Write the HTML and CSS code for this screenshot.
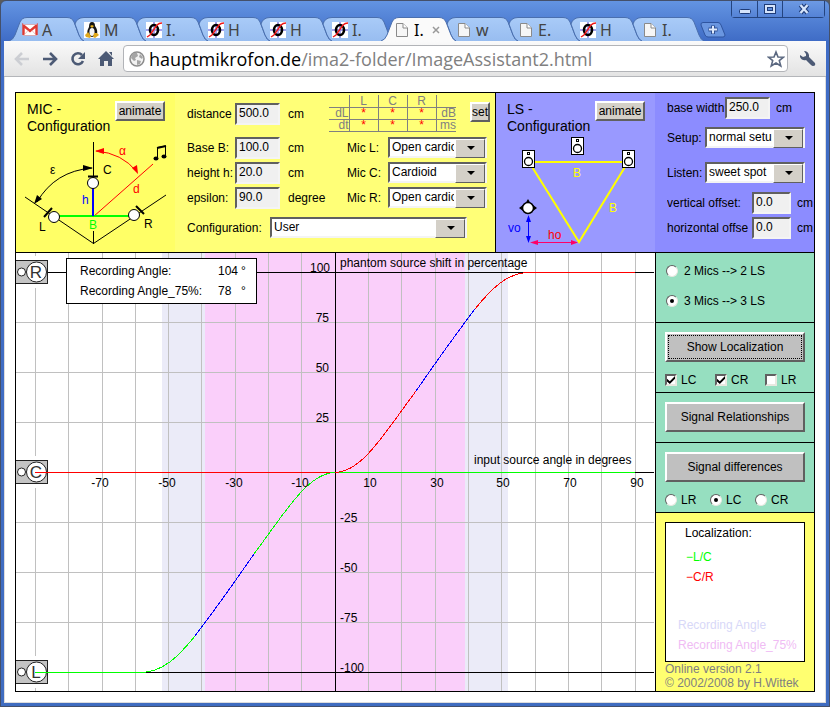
FILE: index.html
```
<!DOCTYPE html>
<html lang="en">
<head>
  <meta charset="UTF-8">
  <meta name="viewport" content="width=device-width, initial-scale=1.0">
  <title>Image Assistant 2</title>
  <link rel="stylesheet" href="styles.css">
</head>
<body>
<!-- shared icons -->
<svg class="defs" width="0" height="0" aria-hidden="true">
  <linearGradient id="tab-fill" x1="0" y1="0" x2="0" y2="1">
    <stop offset="0" stop-color="#a9cbf8"/>
    <stop offset="1" stop-color="#98bdf0"/>
  </linearGradient>
  <symbol id="tab-first" viewBox="0 0 75 24">
    <path d="M0 24 Q4 23 6 18 L11 5 Q13 .5 18 .5 H58 Q63 .5 65 5 L70 18 Q72 23 75 24"/>
  </symbol>
  <symbol id="tab-next" viewBox="0 0 75 24">
    <path d="M13 24 Q10 23 8 18 L4 7 Q6 .5 13 .5 H58 Q63 .5 65 5 L70 18 Q72 23 75 24"/>
  </symbol>
  <symbol id="ico-phase" viewBox="0 0 16 16">
    <rect width="16" height="16" fill="#fff"/>
    <path d="M0 8 H16 M8 0 V16" stroke="#8c84e8" stroke-width="1.5"/>
    <ellipse cx="8" cy="8" rx="4" ry="5" fill="none" stroke="#000" stroke-width="2.6"/>
    <path d="M1 15 L4 13 L11 3 Q13 1 16 1" fill="none" stroke="#f01818" stroke-width="1.4"/>
  </symbol>
  <symbol id="ico-page" viewBox="0 0 16 16">
    <path d="M2.500 1.500 H9 L13.500 6 V14.500 H2.500 Z" fill="#f6f6f6" stroke="#8a8a8a"/>
    <path d="M9 1.500 V6 H13.500" fill="#fff" stroke="#8a8a8a"/>
  </symbol>
  <symbol id="ls-box" viewBox="0 0 14 18">
    <rect x=".5" y=".5" width="12" height="17" fill="#fff" stroke="#000"/>
    <rect x="5.500" y="2.500" width="2" height="2" fill="none" stroke="#000"/>
    <circle cx="6.500" cy="11.500" r="4" fill="#fff" stroke="#000" stroke-width="1.3"/>
  </symbol>
</svg>

<div class="window">
  <header class="titlebar">
    <nav class="tabs">
      <a href="#" class="tab">
        <svg class="shape"><use href="#tab-first"/></svg>
        <svg class="favicon" viewBox="0 0 16 16"><rect x="1" y="3" width="14" height="10" fill="#fff"/><path d="M1.500 13 V3.500 L8 9 L14.500 3.500 V13" fill="none" stroke="#e03a32" stroke-width="2.400"/><path d="M2 13 L6 8.500 M14 13 L10 8.500 M1 13.500 H15 M1 2.500 H15" stroke="#e8a5a0" stroke-width=".7"/></svg>
        <span>A</span>
      </a>
      <a href="#" class="tab">
        <svg class="shape"><use href="#tab-next"/></svg>
        <svg class="favicon" viewBox="0 0 16 16"><rect width="16" height="16" fill="#fff"/><path d="M8 0 Q11 0 11 4 Q14 8 13 12 Q11 15 8 15 Q5 15 3 12 Q3 8 5 5 Q5 0 8 0Z" fill="#151515"/><ellipse cx="8" cy="10" rx="2.600" ry="4" fill="#f4f4f4"/><path d="M6 4 L8 3 L10 4 L8 6Z" fill="#e8b11c"/><path d="M1 13 L4 10 L7 14 L6 16 L2 15Z M10 11 L13 11 L15 13 L11 16 L9 15Z" fill="#e0a81c"/></svg>
        <span>M</span>
      </a>
      <a href="#" class="tab"><svg class="shape"><use href="#tab-next"/></svg><svg class="favicon"><use href="#ico-phase"/></svg><span>I.</span></a>
      <a href="#" class="tab"><svg class="shape"><use href="#tab-next"/></svg><svg class="favicon"><use href="#ico-phase"/></svg><span>H</span></a>
      <a href="#" class="tab"><svg class="shape"><use href="#tab-next"/></svg><svg class="favicon"><use href="#ico-phase"/></svg><span>H</span></a>
      <a href="#" class="tab"><svg class="shape"><use href="#tab-next"/></svg><svg class="favicon"><use href="#ico-phase"/></svg><span>I.</span></a>
      <a href="#" class="tab active"><svg class="shape"><use href="#tab-first"/></svg><svg class="favicon"><use href="#ico-page"/></svg><span>I.</span><svg class="tab-close" viewBox="0 0 8 8"><path d="M1 1 L7 7 M7 1 L1 7" stroke="#999" stroke-width="1.500"/></svg></a>
      <a href="#" class="tab"><svg class="shape"><use href="#tab-next"/></svg><svg class="favicon"><use href="#ico-page"/></svg><span>w</span></a>
      <a href="#" class="tab"><svg class="shape"><use href="#tab-next"/></svg><svg class="favicon"><use href="#ico-page"/></svg><span>E.</span></a>
      <a href="#" class="tab"><svg class="shape"><use href="#tab-next"/></svg><svg class="favicon"><use href="#ico-phase"/></svg><span>H</span></a>
      <a href="#" class="tab"><svg class="shape"><use href="#tab-next"/></svg><svg class="favicon"><use href="#ico-page"/></svg><span>I.</span></a>
      <button class="new-tab" aria-label="New tab">
        <svg width="26" height="16" viewBox="0 0 26 16"><path d="M3 .5 H18 Q20 .5 21 3 L25 13 Q25 15 23 15 H8 Q6 15 5 13 L1 3 Q.5 .5 3 .5Z" fill="#6a96e0" stroke="#2f55a0"/><path d="M13 3.500 V12 M8.500 7.500 H17.500" stroke="#2f4f90" stroke-width="4"/><path d="M13 4 V11.500 M9 7.500 H17" stroke="#dfeafc" stroke-width="2"/></svg>
      </button>
    </nav>
    <div class="win-buttons">
      <button aria-label="Minimize"><svg width="12" height="12" viewBox="0 0 12 12"><rect x=".5" y="6.500" width="11" height="4" rx="1" fill="#d5e4fb" stroke="#1f3c78"/></svg></button>
      <button aria-label="Maximize"><svg width="12" height="12" viewBox="0 0 12 12"><path d="M2 3 H10 V9 H2Z" fill="none" stroke="#1f3c78" stroke-width="4"/><path d="M2 3 H10 V9 H2Z" fill="none" stroke="#d5e4fb" stroke-width="2"/></svg></button>
      <button class="wide" aria-label="Close"><svg width="12" height="12" viewBox="0 0 12 12"><path d="M2.500 2 L9.500 10 M9.500 2 L2.500 10" stroke="#1f3c78" stroke-width="4.500"/><path d="M2.500 2 L9.500 10 M9.500 2 L2.500 10" stroke="#d5e4fb" stroke-width="2.400"/></svg></button>
    </div>
  </header>

  <div class="toolbar">
    <button aria-label="Back"><svg width="16" height="16" viewBox="0 0 16 16"><path d="M15 8 H2 M8 2 L2 8 L8 14" fill="none" stroke="#ccced3" stroke-width="2.600"/></svg></button>
    <button aria-label="Forward"><svg width="16" height="16" viewBox="0 0 16 16"><path d="M1 8 H14 M8 2 L14 8 L8 14" fill="none" stroke="#4c5a75" stroke-width="2.600"/></svg></button>
    <button aria-label="Reload"><svg width="16" height="16" viewBox="0 0 16 16"><path d="M12 4 A5.500 5.500 0 1 0 13 10" fill="none" stroke="#4c5a75" stroke-width="2.600"/><path d="M15 1 V8 H8Z" fill="#4c5a75"/></svg></button>
    <button aria-label="Home"><svg width="16" height="16" viewBox="0 0 16 16"><path d="M8 0 L16 8 H14 V15 H10 V10 H6 V15 H2 V8 H0Z M11 1 H14 V5Z" fill="#4c5a75"/></svg></button>
    <div class="omnibox">
      <svg width="16" height="16" viewBox="0 0 16 16"><circle cx="8" cy="8" r="7" fill="#f2f2f2" stroke="#8c8c8c" stroke-width="1.500"/><path d="M3 3 Q6 1 8 2 L9 5 L6 7 L7 9 L5 10 L2 7Z M11 3 L14 6 L13 8 L10 6Z M8 9 L12 10 L11 13 L8 14Z" fill="#a5a5a5"/></svg>
      <a href="#" class="url">hauptmikrofon.de<span>/ima2-folder/ImageAssistant2.html</span></a>
      <svg width="18" height="18" viewBox="0 0 18 18"><path d="M9 2 L11 7 L16.500 7.200 L12.300 10.600 L13.800 16 L9 13 L4.200 16 L5.700 10.600 L1.500 7.200 L7 7Z" fill="#fff" stroke="#5b6880" stroke-width="1.600"/></svg>
    </div>
    <button class="wrench" aria-label="Settings"><svg width="16" height="16" viewBox="0 0 16 16"><path d="M4 0 Q8 0 9 4 L9 6 L15 12 Q16 15 13 15 Q12 15 11 14 L6 9 Q2 10 0 6 L0 4 L3 6 L6 5 L6 3Z" fill="#4c5a75"/></svg></button>
  </div>

  <main class="page">
    <div class="applet">
      <div class="top">
        <!-- microphone setup -->
        <section class="mic">
          <div class="figure">
            <div class="figure-head">
              <h2>MIC - Configuration</h2>
              <button class="btn small">animate</button>
            </div>
            <svg viewBox="16 136 159 116">
              <g fill="none" stroke="#000">
                <path d="M93.500 142 V216 M93.500 231 V244 M25 197 L93.500 243.500 L166 195"/>
                <path d="M37 202 Q55 171 92 168"/>
                <path d="M88 176.500 H98 M44 217 L52 208 M136 206 L144 214" stroke-width="2"/>
              </g>
              <path d="M34 204 L37 195 L42 199Z M93 168 L83 165 L83 171Z"/>
              <g fill="none" stroke="#f00">
                <path d="M96 151 Q122 153 137 172 M93 217 L153 164"/>
              </g>
              <path d="M95 151 L104 148 L104 154Z M138 174 L132 168 L137 165Z" fill="#f00"/>
              <path d="M59 216 H129" stroke="#0f0" stroke-width="2"/>
              <path d="M93 188 V216" stroke="#00f" stroke-width="2"/>
              <g fill="#fff" stroke="#000">
                <circle cx="93" cy="183" r="5.500"/>
                <circle cx="54" cy="217" r="5.500"/>
                <circle cx="134" cy="215" r="5.500"/>
              </g>
              <path d="M157.500 158 V147.500 L165.500 146 V156" fill="none" stroke="#000"/>
              <path d="M157 148 L166 146" stroke="#000" stroke-width="2"/>
              <ellipse cx="156" cy="158.500" rx="2.500" ry="2"/>
              <ellipse cx="164" cy="156.500" rx="2.500" ry="2"/>
              <text x="50" y="174">ε</text>
              <text x="103" y="174">C</text>
              <text x="39" y="231">L</text>
              <text x="144" y="228">R</text>
              <text x="119" y="155" fill="#f00">α</text>
              <text x="133" y="193" fill="#f00">d</text>
              <text x="82" y="204" fill="#00f">h</text>
              <text x="89" y="229" fill="#0f0">B</text>
            </svg>
          </div>
          <form class="mic-form">
            <div class="first-row">
              <label for="distance">distance</label>
              <input type="text" id="distance" value="500.0">
              <span class="unit">cm</span>
              <table>
                <tr><td></td><th>L</th><th>C</th><th>R</th><td></td></tr>
                <tr><td>dL</td><td class="val">*</td><td class="val">*</td><td class="val">*</td><td>dB</td></tr>
                <tr><td>dt</td><td class="val">*</td><td class="val">*</td><td class="val">*</td><td>ms</td></tr>
              </table>
              <button type="button" class="btn small set">set</button>
            </div>
            <div class="rows">
              <label for="base">Base B:</label>
              <input type="text" id="base" value="100.0">
              <span class="unit">cm</span>
              <label for="mic-l">Mic L:</label>
              <span class="select"><select id="mic-l"><option>Open cardioid</option></select></span>

              <label for="height">height h:</label>
              <input type="text" id="height" value="20.0">
              <span class="unit">cm</span>
              <label for="mic-c">Mic C:</label>
              <span class="select"><select id="mic-c"><option>Cardioid</option></select></span>

              <label for="epsilon">epsilon:</label>
              <input type="text" id="epsilon" value="90.0">
              <span class="unit">degree</span>
              <label for="mic-r">Mic R:</label>
              <span class="select"><select id="mic-r"><option>Open cardioid</option></select></span>
            </div>
            <div class="config-row">
              <label for="config">Configuration:</label>
              <span class="select"><select id="config"><option>User</option></select></span>
            </div>
          </form>
        </section>

        <!-- loudspeaker setup -->
        <section class="ls">
          <div class="figure">
            <div class="figure-head">
              <h2>LS - Configuration</h2>
              <button class="btn small">animate</button>
            </div>
            <svg viewBox="496 136 159 116">
              <path d="M529 162 H628 L579 242Z" fill="none" stroke="#ff0" stroke-width="2"/>
              <use href="#ls-box" x="522" y="150" width="14" height="18"/>
              <use href="#ls-box" x="571" y="137" width="14" height="18"/>
              <use href="#ls-box" x="622" y="150" width="14" height="18"/>
              <path d="M528 199 L531 204 H525Z M519 208 L523 205 V211Z M537 208 L533 205 V211Z"/>
              <circle cx="528" cy="208" r="5.500" fill="#fff" stroke="#000" stroke-width="1.500"/>
              <path d="M528.500 218 V241" stroke="#00f"/>
              <path d="M528.500 215 L531 222 H526Z M528.500 243 L531 236 H526Z" fill="#00f"/>
              <path d="M533 242.500 H576" stroke="#f06"/>
              <path d="M530 242.500 L538 240 V245Z M578 242.500 L571 240 V245Z" fill="#f06"/>
              <text x="573" y="177" fill="#ff0">B</text>
              <text x="609" y="212" fill="#ff0">B</text>
              <text x="508" y="232" fill="#00f">vo</text>
              <text x="548" y="239" fill="#f00">ho</text>
            </svg>
          </div>
          <form class="ls-form">
            <div class="row"><label for="width">base width</label><input type="text" id="width" value="250.0"><span class="unit">cm</span></div>
            <div class="row setup"><label for="setup">Setup:</label><span class="select"><select id="setup"><option>normal setup</option></select></span></div>
            <div class="row setup"><label for="listen">Listen:</label><span class="select"><select id="listen"><option>sweet spot</option></select></span></div>
            <div class="row offset"><label for="voff">vertical offset:</label><input type="text" id="voff" value="0.0"><span class="unit">cm</span></div>
            <div class="row offset"><label for="hoff">horizontal offse</label><input type="text" id="hoff" value="0.0"><span class="unit">cm</span></div>
          </form>
        </section>
      </div>

      <div class="bottom">
        <!-- localization curve -->
        <div class="chart">
          <svg viewBox="16 253 639 438">
            <rect x="162" y="253" width="346" height="438" fill="#ebebf8"/>
            <rect x="205" y="253" width="260" height="438" fill="#facffa"/>
            <g fill="none" stroke="#c0c0c0" shape-rendering="crispEdges">
              <path d="M35.500 253 V691 M68.500 253 V691 M102.500 253 V691 M135.500 253 V691 M168.500 253 V691 M201.500 253 V691 M235.500 253 V691 M268.500 253 V691 M301.500 253 V691 M368.500 253 V691 M401.500 253 V691 M435.500 253 V691 M468.500 253 V691 M501.500 253 V691 M535.500 253 V691 M568.500 253 V691 M601.500 253 V691 M635.500 253 V691"/>
              <path d="M16 322.500 H654 M16 372.500 H654 M16 422.500 H654 M16 522.500 H654 M16 572.500 H654 M16 622.500 H654"/>
            </g>
            <path d="M16 256 H48 V288 H16Z M16 456 H48 V488 H16Z M16 656 H48 V688 H16Z" fill="#fff"/>
            <g class="speaker">
              <rect x="15.500" y="260.500" width="32" height="23"/>
              <circle cx="21.500" cy="272" r="4"/>
              <circle cx="36.500" cy="272" r="10"/>
              <text x="36" y="278">R</text>
            </g>
            <g class="speaker">
              <rect x="15.500" y="460.500" width="32" height="23"/>
              <circle cx="21.500" cy="472" r="4"/>
              <circle cx="36.500" cy="472" r="10"/>
              <text x="36" y="478">C</text>
            </g>
            <g class="speaker">
              <rect x="15.500" y="660.500" width="32" height="23"/>
              <circle cx="21.500" cy="672" r="4"/>
              <circle cx="36.500" cy="672" r="10"/>
              <text x="36" y="678">L</text>
            </g>
            <g fill="none" stroke="#000" shape-rendering="crispEdges">
              <path d="M335.500 253 V691 M48 272.500 H654 M335 472.500 H654 M142 672.500 H654"/>
              <path d="M35 472.500 H335 M529 272.500 H635" stroke="#f00"/>
              <path d="M335 472.500 H635 M35 672.500 H142" stroke="#0f0"/>
              <path d="M335 472.500 C362 472 384 434 416 391" stroke="#f00"/>
              <path d="M416 391 C436 362 456 334 475 309" stroke="#00f"/>
              <path d="M475 309 C492 288 507 273 529 272.500" stroke="#f00"/>
              <path d="M335 472.500 C308 473 286 511 254 554" stroke="#0f0"/>
              <path d="M254 554 C234 583 214 611 195 636" stroke="#00f"/>
              <path d="M195 636 C178 657 163 672 141 672.500" stroke="#0f0"/>
            </g>
            <g text-anchor="end">
              <text x="330" y="272">100</text>
              <text x="329" y="322">75</text>
              <text x="329" y="372">50</text>
              <text x="329" y="422">25</text>
            </g>
            <g>
              <text x="340" y="522">-25</text>
              <text x="340" y="572">-50</text>
              <text x="340" y="622">-75</text>
              <text x="340" y="672">-100</text>
            </g>
            <g text-anchor="middle">
              <text x="100" y="487">-70</text>
              <text x="167" y="487">-50</text>
              <text x="234" y="487">-30</text>
              <text x="300" y="487">-10</text>
              <text x="370" y="487">10</text>
              <text x="437" y="487">30</text>
              <text x="503" y="487">50</text>
              <text x="570" y="487">70</text>
              <text x="637" y="487">90</text>
            </g>
            <text x="340" y="267">phantom source shift in percentage</text>
            <text x="474" y="464">input source angle in degrees</text>
            <rect x="66.500" y="258.500" width="190" height="45" fill="#fff" stroke="#000"/>
            <text x="80" y="275">Recording Angle:</text>
            <text x="218" y="275">104</text>
            <text x="241" y="275">°</text>
            <text x="80" y="295">Recording Angle_75%:</text>
            <text x="218" y="295">78</text>
            <text x="241" y="295">°</text>
          </svg>
        </div>

        <aside class="side">
          <div class="panel modes">
            <label><input type="radio" name="mode">2 Mics --&gt; 2 LS</label>
            <label><input type="radio" name="mode" checked>3 Mics --&gt; 3 LS</label>
          </div>
          <div class="panel">
            <button class="btn big focused">Show Localization</button>
            <div class="checks">
              <label><input type="checkbox" checked>LC</label>
              <label><input type="checkbox" checked>CR</label>
              <label><input type="checkbox">LR</label>
            </div>
          </div>
          <div class="panel">
            <button class="btn big">Signal Relationships</button>
          </div>
          <div class="panel">
            <button class="btn big">Signal differences</button>
            <div class="radios">
              <label><input type="radio" name="pair">LR</label>
              <label><input type="radio" name="pair" checked>LC</label>
              <label><input type="radio" name="pair">CR</label>
            </div>
          </div>
          <div class="legend">
            <div class="legend-box">
              <h3>Localization:</h3>
              <p class="lc">−L/C</p>
              <p class="cr">−C/R</p>
              <p class="ra">Recording Angle</p>
              <p class="ra75">Recording Angle_75%</p>
            </div>
            <p class="version">Online version 2.1<br>© 2002/2008 by H.Wittek</p>
          </div>
        </aside>
      </div>
    </div>
  </main>
</div>
</body>
</html>
```
FILE: styles.css
```
* {
  margin: 0;
  padding: 0;
  box-sizing: border-box;
}

body {
  font-family: "Liberation Sans", Arial, sans-serif;
  font-size: 12px;
  color: #000;
  background: #5b5b5b;
}

button, input, select {
  font: inherit;
  color: inherit;
}

svg {
  display: block;
}

svg text {
  font-size: 12px;
}

.defs {
  position: absolute;
}

/* Browser window */
.window {
  min-height: 100vh;
  display: flex;
  flex-direction: column;
  padding: 0 3px 3px;
  border: 1px solid #44506a;
  border-radius: 6px 6px 0 0;
  background: linear-gradient(#6394e2, #3f6cc6 40px, #3f6cc0);
}

.titlebar {
  position: relative;
  height: 40px;
  padding: 16px 0 0 5px;
}

.tabs {
  display: flex;
}

.tab {
  position: relative;
  display: flex;
  align-items: center;
  flex: none;
  width: 75px;
  height: 24px;
  margin-right: -13px;
  padding: 2px 0 0 13px;
  font: 16px/20px "Noto Sans", sans-serif;
  color: #444;
  text-decoration: none;
}

.tab .shape {
  position: absolute;
  top: 0;
  left: 0;
  width: 75px;
  height: 24px;
  fill: url(#tab-fill);
  stroke: #4a6fae;
}

.tab.active .shape {
  fill: #fafafa;
}

.tab.active {
  z-index: 1;
  color: #000;
}

.favicon {
  position: relative;
  flex: none;
  width: 16px;
  height: 16px;
  margin-right: 4px;
}

.tab span {
  position: relative;
}

.tab-close {
  position: relative;
  width: 8px;
  height: 8px;
  margin-left: 8px;
}

.new-tab {
  margin: 5px 0 0 9px;
  height: 16px;
  border: none;
  background: none;
}

.win-buttons {
  position: absolute;
  top: 0;
  right: 1px;
  display: flex;
  border: 1px solid #24447f;
  border-top: none;
  border-radius: 0 0 4px 4px;
}

.win-buttons button {
  display: flex;
  align-items: center;
  justify-content: center;
  width: 25px;
  height: 16px;
  border: none;
  background: linear-gradient(#6d9ae4, #5583d6);
}

.win-buttons button + button {
  border-left: 1px solid #24447f;
}

.win-buttons .wide {
  width: 42px;
}

.toolbar {
  display: flex;
  align-items: center;
  gap: 12px;
  height: 36px;
  padding: 0 10px;
  border-bottom: 1px solid #b4b6ba;
  background: linear-gradient(#fafafa, #e3e3e3);
}

.toolbar button {
  border: none;
  background: none;
}

.omnibox {
  flex: 1;
  display: flex;
  align-items: center;
  gap: 4px;
  height: 27px;
  margin-left: -3px;
  padding: 0 2px 0 5px;
  border: 1px solid #b2b4b8;
  border-radius: 4px;
  background: #fff;
}

.url {
  flex: 1;
  font: 18px/24px "Open Sans", sans-serif;
  color: #000;
  text-decoration: none;
}

.url span {
  color: #808080;
}

.page {
  flex: 1;
  padding: 15px 10px 10px;
  border: 1px solid #dcdcdc;
  border-top: none;
  background: #fff;
}

/* Applet */
.applet {
  border: 1px solid #000;
}

.top {
  display: flex;
  border-bottom: 1px solid #000;
}

.mic {
  flex: 1;
  display: flex;
  background: #ffff77;
}

.ls {
  display: flex;
  width: 319px;
  border-left: 1px solid #000;
  background: #8c8cff;
}

.figure {
  flex: none;
  width: 159px;
  background: #ffff66;
}

.ls .figure {
  background: #9999ff;
}

.figure-head {
  display: flex;
  align-items: flex-start;
  height: 43px;
  padding: 8px 0 0 11px;
}

h2 {
  width: 88px;
  font-size: 14px;
  font-weight: normal;
  line-height: 17px;
}

/* Controls */
.btn {
  border: 2px solid;
  border-color: #fff #606060 #606060 #fff;
  background: #d4d0c8;
  text-align: center;
  white-space: nowrap;
}

.small {
  width: 50px;
  height: 20px;
  line-height: 16px;
}

.small.set {
  width: 20px;
  margin: -4px 0 0 14px;
}

.big {
  position: relative;
  display: block;
  width: 100%;
  height: 30px;
  background: #c0c0c0;
}

.focused::after {
  content: "";
  position: absolute;
  inset: 1px;
  border: 1px dotted #000;
}

input[type="text"] {
  width: 45px;
  height: 22px;
  padding: 0 2px 2px;
  border: 2px solid;
  border-color: #606060 #f4f4f4 #f4f4f4 #606060;
  background: #f0f0f0;
}

.select {
  position: relative;
  display: block;
  align-self: flex-start;
  height: 21px;
}

.select select {
  appearance: none;
  display: block;
  width: 100%;
  height: 21px;
  padding: 0 31px 1px 2px;
  border: 2px solid;
  border-color: #606060 #f4f4f4 #f4f4f4 #606060;
  border-radius: 0;
  background: #fff;
}

.select::before {
  content: "";
  position: absolute;
  top: 2px;
  right: 2px;
  width: 28px;
  height: 17px;
  border: 1px solid;
  border-color: #fff #606060 #606060 #fff;
  background: #d4d0c8;
  pointer-events: none;
}

.select::after {
  content: "";
  position: absolute;
  top: 9px;
  right: 12px;
  border: 4px solid transparent;
  border-top-color: #000;
  border-bottom: none;
  pointer-events: none;
}

input[type="radio"],
input[type="checkbox"] {
  appearance: none;
  display: flex;
  align-items: center;
  justify-content: center;
  flex: none;
  width: 12px;
  height: 12px;
  border: 2px solid;
  border-color: #606060 #e8e8e0 #e8e8e0 #606060;
  background: #fff;
}

input[type="radio"] {
  border-width: 1px;
  border-radius: 50%;
}

input[type="radio"]:checked::before {
  content: "";
  width: 4px;
  height: 4px;
  border-radius: 50%;
  background: #000;
}

input[type="checkbox"]:checked::before {
  content: "";
  width: 8px;
  height: 8px;
  background: #000;
  clip-path: polygon(0 35%, 35% 65%, 100% 0, 100% 35%, 35% 100%, 0 70%);
}

/* Microphone form */
.mic-form {
  flex: 1;
  padding-left: 12px;
}

.first-row {
  display: flex;
  align-items: center;
  height: 41px;
  margin-bottom: 3px;
}

.first-row label {
  width: 48px;
}

.first-row .unit {
  width: 41px;
  margin-left: 8px;
}

table {
  width: 127px;
  border-collapse: collapse;
  table-layout: fixed;
  color: #808080;
  line-height: 11px;
}

th, td {
  width: 29px;
  height: 12px;
  border-bottom: 1px solid #808080;
  font-weight: normal;
  text-align: center;
}

td:first-child {
  width: 20px;
  text-align: right;
}

td:last-child {
  width: 20px;
  text-align: right;
}

th, .val, td:last-child {
  border-left: 1px solid #808080;
}

.val {
  color: #f00;
}

.rows {
  display: grid;
  grid-template-columns: 48px 53px 59px 41px 99px;
  grid-auto-rows: 22px;
  row-gap: 3px;
  align-items: center;
}

.config-row {
  display: flex;
  align-items: center;
  margin-top: 8px;
}

.config-row label {
  width: 83px;
}

.config-row .select {
  width: 197px;
}

/* Loudspeaker form */
.ls-form {
  flex: 1;
  min-width: 0;
  padding: 4px 0 0 12px;
}

.row {
  display: flex;
  align-items: center;
  margin-bottom: 8px;
  overflow: hidden;
  white-space: nowrap;
}

.row label {
  flex: none;
  width: 58px;
}

.row .unit {
  margin-left: 6px;
}

.row.setup {
  margin-bottom: 14px;
}

.setup label {
  width: 38px;
}

.setup .select {
  width: 100px;
}

.setup + .offset {
  margin-top: -5px;
}

.row.offset {
  margin-bottom: 3px;
}

.offset label {
  width: 85px;
}

.offset input[type="text"] {
  width: 39px;
}

/* Chart */
.bottom {
  display: flex;
}

.chart {
  flex: 1;
  background: #fff;
}

.speaker rect {
  fill: #c4c4c4;
  stroke: #222;
}

.speaker circle {
  fill: #fff;
  stroke: #222;
}

.speaker text {
  font-size: 17px;
  fill: #333;
  text-anchor: middle;
}

/* Side column */
.side {
  display: flex;
  flex-direction: column;
  width: 159px;
  border-left: 1px solid #000;
  background: #96dfc0;
}

.panel {
  padding: 9px 9px 10px;
  border-bottom: 1px solid #000;
}

.side label {
  display: flex;
  align-items: center;
  flex: none;
}

.panel.modes {
  padding: 3px 10px 6px;
}

.modes label {
  gap: 6px;
  height: 30px;
}

.checks, .radios {
  display: flex;
  height: 20px;
  margin-top: 8px;
  margin-bottom: -8px;
}

.checks label {
  gap: 4px;
  width: 50px;
}

.radios label {
  gap: 4px;
  width: 45px;
}

.legend {
  flex: 1;
  padding: 9px 9px 0;
  background: #ffff70;
}

.legend-box {
  height: 140px;
  padding-left: 12px;
  border: 1px solid #000;
  background: #fff;
  line-height: 20px;
  white-space: nowrap;
}

.legend-box h3 {
  margin: 0 0 4px 7px;
  font-size: 12px;
  font-weight: normal;
}

.lc {
  margin-left: 8px;
  color: #0f0;
}

.cr {
  margin-left: 8px;
  color: #f00;
}

.ra {
  margin-top: 28px;
  color: #d8d8f8;
}

.ra75 {
  color: #f0bcf4;
}

.version {
  color: #808080;
  line-height: 14px;
  white-space: nowrap;
}
```
